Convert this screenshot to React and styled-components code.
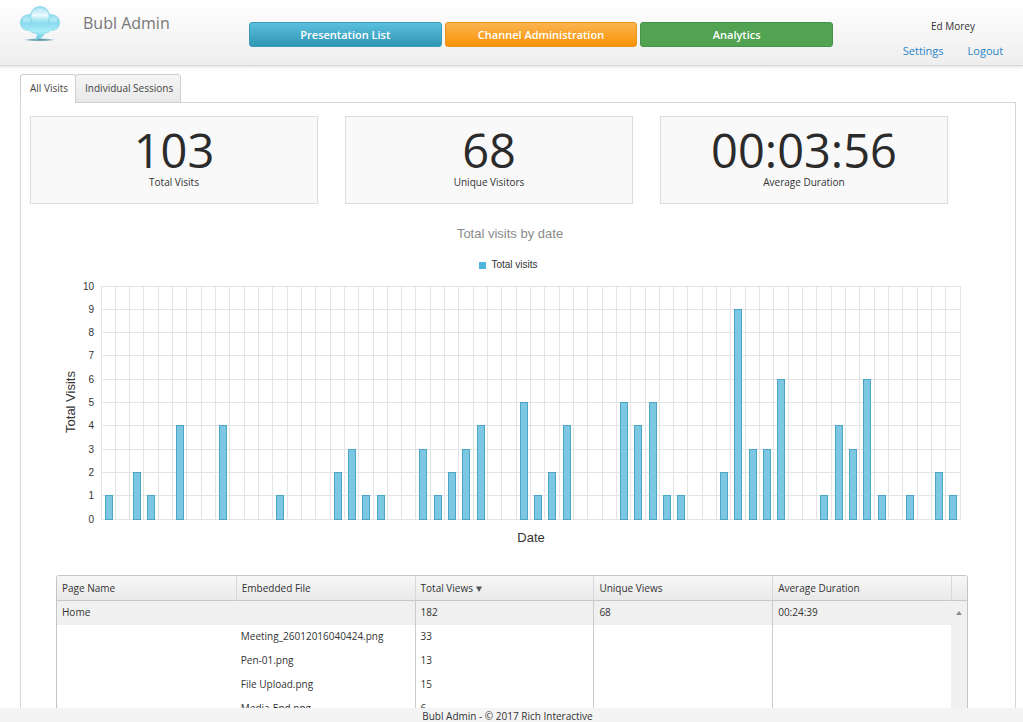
import React from 'react';
import styled, { createGlobalStyle } from 'styled-components';

const GlobalStyle = createGlobalStyle`
  * {
    box-sizing: border-box;
  }

  body {
    margin: 0;
    background: #ffffff;
    color: #333333;
    font-family: 'Trebuchet MS', 'Open Sans', sans-serif;
    font-size: 10px;
  }

  button {
    font-family: inherit;
    cursor: pointer;
  }
`;

const Page = styled.div`
  display: flex;
  flex-direction: column;
  height: 100vh;
  overflow: hidden;
`;

const Header = styled.header`
  display: grid;
  grid-template-columns: 249px 1fr 190px;
  flex: none;
  height: 66px;
  background: linear-gradient(#ffffff, #eeeeee);
  border-bottom: 1px solid #d8d8d8;
  box-shadow: 0 1px 3px rgba(0, 0, 0, 0.12);
`;

const Brand = styled.div`
  display: flex;
  align-items: flex-start;
  gap: 23px;
  padding: 6px 0 0 20px;
`;

const BrandName = styled.h1`
  margin: 6px 0 0;
  color: #777777;
  font-size: 16px;
  font-weight: 400;
  line-height: 22px;
`;

const Nav = styled.nav`
  display: flex;
  gap: 3px;
  padding-top: 22px;
`;

const navColors = {
  blue: { fill: 'linear-gradient(#5bc0de, #2f96b4)', edge: '#3a9cb8' },
  orange: { fill: 'linear-gradient(#fbb450, #f89406)', edge: '#e8941c' },
  green: { fill: '#51a351', edge: '#45934a' },
};

const NavButton = styled.button`
  flex: 1;
  height: 25px;
  padding: 0;
  border: 1px solid ${(props) => navColors[props.$color].edge};
  border-radius: 3px;
  background: ${(props) => navColors[props.$color].fill};
  color: #ffffff;
  font-size: 11px;
  font-weight: 600;
  line-height: 16px;
`;

const User = styled.div`
  padding: 19px 0 0 50px;
  text-align: center;
`;

const UserName = styled.div`
  font-size: 10px;
  line-height: 14px;
`;

const UserLinks = styled.div`
  display: flex;
  justify-content: center;
  gap: 24px;
  margin-top: 10px;
`;

const UserLink = styled.a`
  color: #2a85c8;
  font-size: 11px;
  line-height: 16px;
  text-decoration: none;
`;

const Main = styled.main`
  flex: 1;
  min-height: 0;
  overflow: hidden;
  padding: 8px 7px 0 20px;
`;

const Tabs = styled.div`
  display: flex;
  margin-bottom: -1px;
`;

const Tab = styled.button`
  position: relative;
  height: 29px;
  margin-right: -1px;
  padding: 0 7px 2px 9px;
  border: 1px solid #cfcfcf;
  border-bottom-color: ${(props) => (props.$active ? '#ffffff' : '#cfcfcf')};
  border-radius: 3px 3px 0 0;
  background: ${(props) => (props.$active ? '#ffffff' : 'linear-gradient(#f6f6f6, #e8e8e8)')};
  color: #444444;
  font-size: 10px;
`;

const Panel = styled.section`
  border: 1px solid #d6d6d6;
`;

const Stats = styled.div`
  display: grid;
  grid-template-columns: repeat(3, 1fr);
  gap: 27px;
  margin: 13px 67px 0 9px;
`;

const StatCard = styled.div`
  height: 88px;
  padding-top: 8px;
  border: 1px solid #dcdcdc;
  background: #f9f9f9;
  text-align: center;
`;

const StatValue = styled.div`
  color: #2b2b2b;
  font-size: 47px;
  line-height: 50px;
`;

const StatLabel = styled.div`
  font-size: 10px;
  line-height: 14px;
`;

const ChartBox = styled.figure`
  margin: 22px 25px 0 9px;
  font-family: 'Liberation Sans', Arial, sans-serif;
`;

const ChartTitle = styled.figcaption`
  color: #8a8a8a;
  font-size: 13px;
  line-height: 16px;
  text-align: center;
`;

const Legend = styled.div`
  display: flex;
  align-items: center;
  justify-content: center;
  gap: 5px;
  margin-top: 16px;
  padding-right: 3px;
  font-size: 10px;
  line-height: 14px;
`;

const LegendKey = styled.span`
  width: 7px;
  height: 7px;
  background: #4eb5dc;
`;

const ChartSvg = styled.svg`
  display: block;
  width: 100%;
`;

const TickLabel = styled.text`
  fill: #333333;
  font-size: 10px;
  text-anchor: end;
`;

const AxisLabel = styled.text`
  fill: #333333;
  font-size: 13px;
  text-anchor: middle;
`;

const TableFrame = styled.div`
  margin: 23px 47px 0 35px;
  border: 1px solid #c4c4c4;
  border-radius: 3px 3px 0 0;
  overflow: hidden;
`;

const Table = styled.table`
  width: 100%;
  border-collapse: separate;
  border-spacing: 0;
  table-layout: fixed;
`;

const HeadCell = styled.th`
  height: 25px;
  padding: 0 5px;
  border-bottom: 1px solid #c8c8c8;
  border-left: ${(props) => (props.$first ? 'none' : '1px solid #d8d8d8')};
  background: linear-gradient(#f7f7f7, #e9e9e9);
  font-size: 10px;
  font-weight: 400;
  text-align: left;
`;

const Cell = styled.td`
  height: 24px;
  padding: 0 5px 3px;
  border-left: ${(props) => (props.$divider ? '1px solid #cccccc' : 'none')};
  background: ${(props) => (props.$shaded ? '#f0f0f0' : '#ffffff')};
  font-size: 10px;
  line-height: 14px;
  white-space: nowrap;
`;

const ScrollCell = styled.td`
  padding: 0;
  background: #f0f0f0;
  vertical-align: top;
`;

const ScrollButton = styled.button`
  display: block;
  width: 100%;
  height: 16px;
  padding: 0;
  border: none;
  background: transparent;
`;

const SortMark = styled.svg`
  margin-left: 3px;
`;

const Footer = styled.footer`
  flex: none;
  height: 14px;
  padding-right: 8px;
  background: #f4f4f4;
  font-size: 10px;
  line-height: 16px;
  text-align: center;
`;

const stats = [
  { value: '103', label: 'Total Visits' },
  { value: '68', label: 'Unique Visitors' },
  { value: '00:03:56', label: 'Average Duration' },
];

// One entry per day
const visits = [
  1, 0, 2, 1, 0, 4, 0, 0, 4, 0, 0, 0, 1, 0, 0,
  0, 2, 3, 1, 1, 0, 0, 3, 1, 2, 3, 4, 0, 0, 5,
  1, 2, 4, 0, 0, 0, 5, 4, 5, 1, 1, 0, 0, 2, 9,
  3, 3, 6, 0, 0, 1, 4, 3, 6, 1, 0, 1, 0, 2, 1,
];

const rows = [
  ['Home', '', '182', '68', '00:24:39'],
  ['', 'Meeting_26012016040424.png', '33', '', ''],
  ['', 'Pen-01.png', '13', '', ''],
  ['', 'File Upload.png', '15', '', ''],
  ['', 'Media-End.png', '6', '', ''],
];

const plot = { left: 72, top: 14, width: 859, height: 233, max: 10 };

const xAt = (i) => Math.floor(plot.left + (plot.width * i) / visits.length);
const yAt = (v) => Math.floor(plot.top + plot.height * (1 - v / plot.max));

function CloudLogo() {
  return (
    <svg width="40" height="37" viewBox="0 0 40 37" aria-hidden="true">
      <defs>
        <linearGradient id="cloud" x1="0" y1="0" x2="0" y2="1">
          <stop offset="0" stopColor="#9adcef" />
          <stop offset="0.5" stopColor="#8cdaee" />
          <stop offset="0.75" stopColor="#a8eef8" />
          <stop offset="1" stopColor="#5fc3e0" />
        </linearGradient>
        <linearGradient id="bubble" x1="0" y1="0" x2="0" y2="1">
          <stop offset="0" stopColor="#b5e6f5" />
          <stop offset="0.45" stopColor="#e9fafe" />
          <stop offset="1" stopColor="#93e0f2" stopOpacity="0" />
        </linearGradient>
        <radialGradient id="shadow">
          <stop offset="0" stopColor="#3a7d92" />
          <stop offset="0.6" stopColor="#6fa5b5" stopOpacity="0.8" />
          <stop offset="1" stopColor="#9fc4cf" stopOpacity="0" />
        </radialGradient>
      </defs>
      <ellipse cx="19.500" cy="33.800" rx="16.500" ry="1.700" fill="url(#shadow)" />
      <path
        d="M10.500 8.800C11.500 3.800 15.200 0.600 20 0.600C24.800 0.600 28.500 3.800 29.500 8.800C35.500 7.800 39.600 11.800 39.600 16.500C39.600 22 35.500 25 30.500 24.200C29 26.500 26.500 27.300 24.500 27C23.500 30 20.500 32.800 15.500 33.800C17 31.500 17.300 29.500 16.800 27.200C13.500 27.500 11 26.500 9.500 24.200C4.500 25 0.400 22 0.400 16.500C0.400 11.800 4.500 7.800 10.500 8.800Z"
        fill="url(#cloud)"
        stroke="#7fcbe1"
        strokeWidth="0.600"
      />
      <ellipse cx="6.500" cy="13.500" rx="4" ry="3" fill="#d8f6fc" opacity="0.400" />
      <ellipse cx="33.500" cy="13.500" rx="4" ry="3" fill="#d8f6fc" opacity="0.400" />
      <circle cx="20" cy="10.500" r="8.800" fill="url(#bubble)" />
    </svg>
  );
}

function VisitsChart() {
  const bottom = yAt(0);

  return (
    <ChartSvg viewBox="0 0 960 280" role="img" aria-label="Total visits by date">
      <g stroke="#e4e4e4" shapeRendering="crispEdges">
        {Array.from({ length: plot.max + 1 }, (_, v) => (
          <line key={v} x1={plot.left - 1} x2={plot.left + plot.width} y1={yAt(v) + 0.5} y2={yAt(v) + 0.5} />
        ))}
        {Array.from({ length: visits.length + 1 }, (_, i) => (
          <line key={i} x1={xAt(i) - 0.5} x2={xAt(i) - 0.5} y1={plot.top} y2={bottom} />
        ))}
      </g>
      {Array.from({ length: plot.max + 1 }, (_, v) => (
        <TickLabel key={v} x={64} y={yAt(v) + 4}>{v}</TickLabel>
      ))}
      {visits.map((count, i) => count > 0 && (
        <rect
          key={i}
          x={xAt(i) + 3.5}
          y={yAt(count) + 0.5}
          width={7}
          height={bottom - yAt(count)}
          fill="#7cc8e3"
          stroke="#4ba5c6"
        />
      ))}
      <AxisLabel transform="translate(45 130) rotate(-90)">Total Visits</AxisLabel>
      <AxisLabel x={501} y={270}>Date</AxisLabel>
    </ChartSvg>
  );
}

function PagesTable() {
  return (
    <TableFrame>
      <Table>
        <colgroup>
          <col />
          <col />
          <col />
          <col />
          <col />
          <col width="16" />
        </colgroup>
        <thead>
          <tr>
            <HeadCell $first>Page Name</HeadCell>
            <HeadCell>Embedded File</HeadCell>
            <HeadCell aria-sort="descending">
              Total Views
              <SortMark width="6" height="6" viewBox="0 0 6 6" aria-hidden="true">
                <path d="M0 0.500H6L3 6Z" fill="#555555" />
              </SortMark>
            </HeadCell>
            <HeadCell>Unique Views</HeadCell>
            <HeadCell>Average Duration</HeadCell>
            <HeadCell />
          </tr>
        </thead>
        <tbody>
          {rows.map((row, r) => (
            <tr key={r}>
              {row.map((value, c) => (
                <Cell key={c} $divider={c > 1} $shaded={r === 0}>{value}</Cell>
              ))}
              <ScrollCell>
                {r === 0 && (
                  <ScrollButton type="button" aria-label="Scroll up">
                    <svg width="6" height="4" viewBox="0 0 6 4">
                      <path d="M0 4L3 0L6 4Z" fill="#8c8c8c" />
                    </svg>
                  </ScrollButton>
                )}
              </ScrollCell>
            </tr>
          ))}
        </tbody>
      </Table>
    </TableFrame>
  );
}

function App() {
  return (
    <Page>
      <GlobalStyle />
      <Header>
        <Brand>
          <CloudLogo />
          <BrandName>Bubl Admin</BrandName>
        </Brand>
        <Nav>
          <NavButton type="button" $color="blue">Presentation List</NavButton>
          <NavButton type="button" $color="orange">Channel Administration</NavButton>
          <NavButton type="button" $color="green">Analytics</NavButton>
        </Nav>
        <User>
          <UserName>Ed Morey</UserName>
          <UserLinks>
            <UserLink href="#settings">Settings</UserLink>
            <UserLink href="#logout">Logout</UserLink>
          </UserLinks>
        </User>
      </Header>
      <Main>
        <Tabs role="tablist">
          <Tab type="button" role="tab" aria-selected="true" $active>All Visits</Tab>
          <Tab type="button" role="tab" aria-selected="false">Individual Sessions</Tab>
        </Tabs>
        <Panel>
          <Stats>
            {stats.map((stat) => (
              <StatCard key={stat.label}>
                <StatValue>{stat.value}</StatValue>
                <StatLabel>{stat.label}</StatLabel>
              </StatCard>
            ))}
          </Stats>
          <ChartBox>
            <ChartTitle>Total visits by date</ChartTitle>
            <Legend>
              <LegendKey />
              Total visits
            </Legend>
            <VisitsChart />
          </ChartBox>
          <PagesTable />
        </Panel>
      </Main>
      <Footer>Bubl Admin - © 2017 Rich Interactive</Footer>
    </Page>
  );
}

export default App;
